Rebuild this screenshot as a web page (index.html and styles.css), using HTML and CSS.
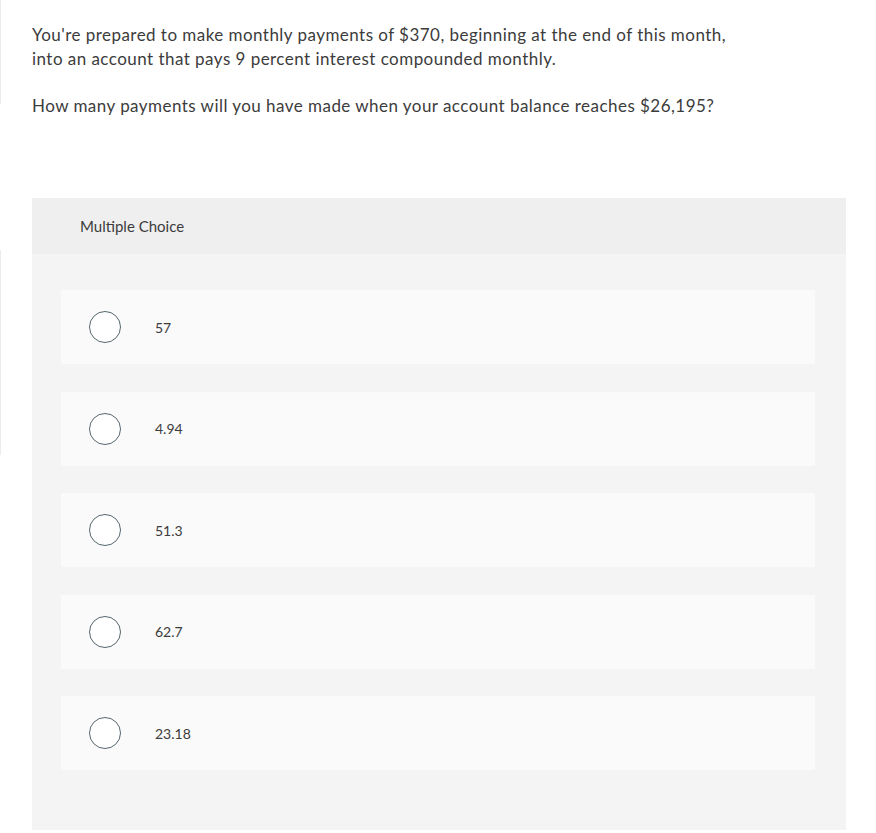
FILE: index.html
```
<!DOCTYPE html>
<html>
<head>
<meta charset="utf-8">
<link rel="stylesheet" href="styles.css">
</head>
<body>
<div class="edge edge-top"></div>
<div class="edge edge-mid"></div>
<main class="page">
  <div class="question">
    <p>You're prepared to make monthly payments of $370, beginning at the end of this month,<br>into an account that pays 9 percent interest compounded monthly.</p>
    <p>How many payments will you have made when your account balance reaches $26,195?</p>
  </div>
  <section class="mc">
    <div class="mc-head">Multiple Choice</div>
    <div class="mc-body">
      <div class="opt"><span class="radio"></span><span class="lbl">57</span></div>
      <div class="opt"><span class="radio"></span><span class="lbl">4.94</span></div>
      <div class="opt"><span class="radio"></span><span class="lbl">51.3</span></div>
      <div class="opt"><span class="radio"></span><span class="lbl">62.7</span></div>
      <div class="opt"><span class="radio"></span><span class="lbl">23.18</span></div>
    </div>
  </section>
</main>
</body>
</html>
```
FILE: styles.css
```
html, body {
  margin: 0;
  padding: 0;
  background: #ffffff;
}
body {
  font-family: Lato, "Noto Sans", sans-serif;
  color: #3c3c3c;
  position: relative;
}
.edge {
  position: absolute;
  left: 0;
  width: 1px;
  background: #ececec;
}
.edge-top { top: 0; height: 104px; }
.edge-mid { top: 250px; height: 205px; }
.page {
  padding: 23px 30px 0 32px;
}
.question p {
  margin: 0 0 23px 0;
  font-size: 17px;
  line-height: 24px;
  letter-spacing: 0.46px;
}
.question {
  margin-bottom: 80px;
}
.mc {
  width: 814px;
  background: #f4f4f4;
}
.mc-head {
  height: 56px;
  background: #efefef;
  display: flex;
  align-items: center;
  padding-left: 48px;
  font-size: 15px;
  padding-bottom: 1px;
  box-sizing: border-box;
}
.mc-body {
  padding: 36px 31px 60px 29px;
  display: flex;
  flex-direction: column;
  gap: 27.5px;
}
.opt {
  height: 74px;
  background: #fafafa;
  display: flex;
  align-items: center;
  padding-left: 28px;
}
.radio {
  width: 30px;
  height: 30px;
  border: 1px solid #56676f;
  border-radius: 50%;
  background: #ffffff;
  flex: none;
}
.lbl {
  margin-left: 34px;
  font-size: 14px;
}
```
